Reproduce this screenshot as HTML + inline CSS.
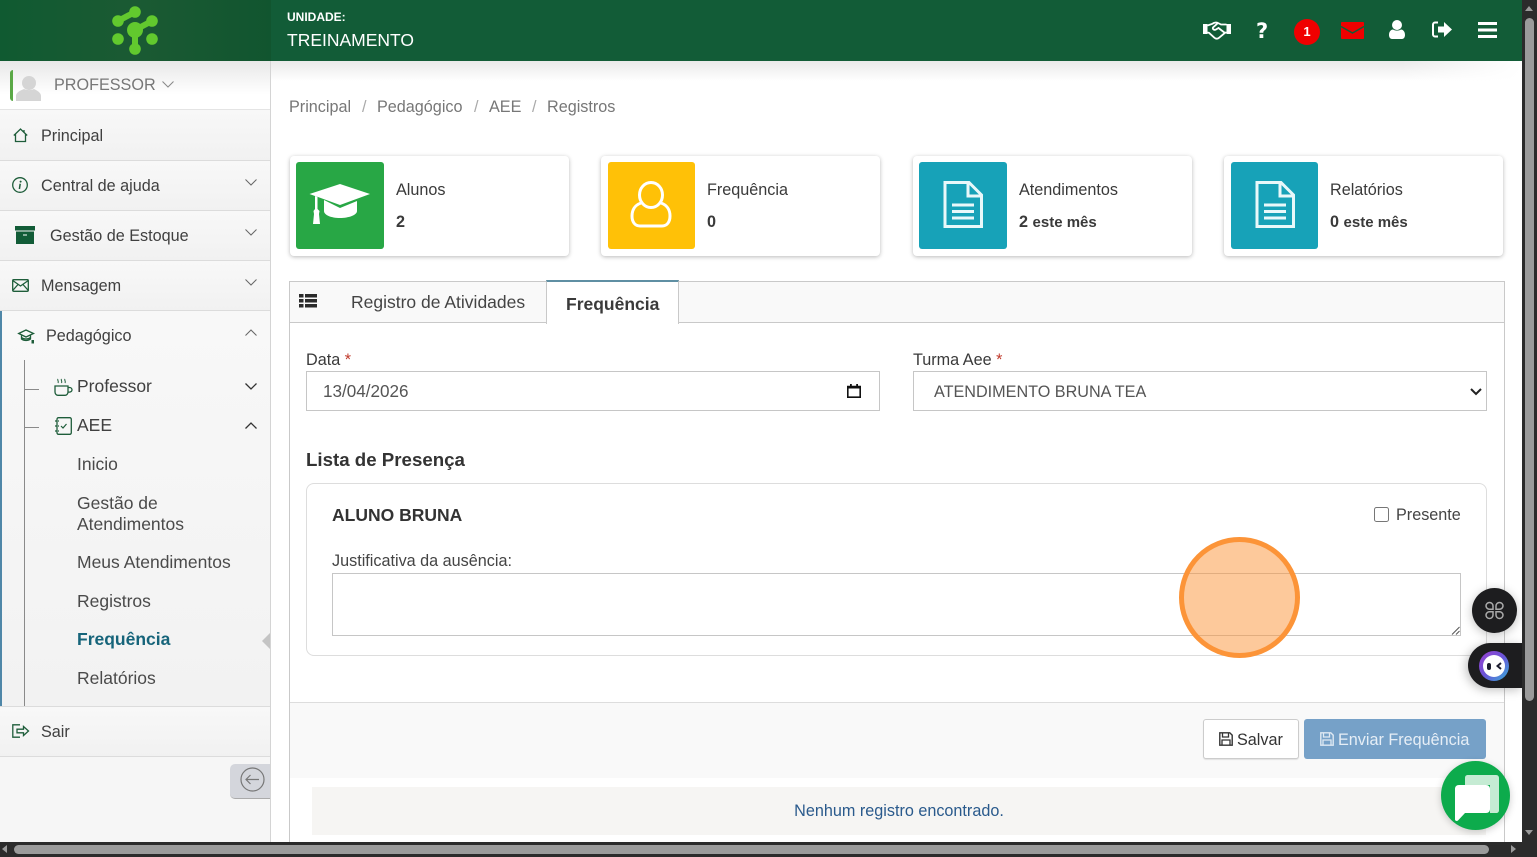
<!DOCTYPE html>
<html lang="pt-BR"><head><meta charset="utf-8"><title>Frequência</title>
<style>
*{box-sizing:border-box}
html,body{margin:0;padding:0;width:1537px;height:857px;overflow:hidden;background:#fff;font-family:"Liberation Sans",sans-serif;color:#3a3a3a;font-size:16.2px}
.a{position:absolute}
.t{position:absolute;white-space:nowrap;line-height:20px}
svg{position:absolute;display:block;overflow:visible}
.item{position:absolute;left:0;width:270px;background:linear-gradient(#f8f8f8,#f1f1f1);border-bottom:1px solid #dcdcdc}
.card{position:absolute;top:156px;width:279px;height:100px;background:#fff;border-radius:4px;box-shadow:0 1px 4px rgba(0,0,0,.28)}
.sq{position:absolute;top:6px;height:87px;border-radius:3px}
.card .l{position:absolute;left:106px;top:24px;line-height:20px;white-space:nowrap}
.card .n{position:absolute;left:106px;top:56px;line-height:20px;font-weight:bold;white-space:nowrap}
.g{fill:none;stroke:#1e5d3a;stroke-width:1.3}
.c{fill:none;stroke:#666;stroke-width:1}
.w{color:#404040}
.s{font-size:17.5px;color:#4a4a4a}
</style></head><body>

<!-- header -->
<div class="a" style="left:0;top:0;width:1522px;height:61px;background:#125c37"></div>
<div class="a" style="left:0;top:0;width:271px;height:61px;background:linear-gradient(90deg,#105a31,#1b5a33 50%,#11552f)"></div>
<svg style="left:101px;top:0" width="70" height="60" viewBox="0 0 70 60">
<g stroke="#62c92e" fill="none"><path d="M17 21 34 12" stroke-width="6"/><path d="M34 30 51 21" stroke-width="6"/><path d="M34 30V49" stroke-width="6"/></g>
<g fill="#62c92e"><circle cx="34" cy="12" r="5.800"/><circle cx="17" cy="21" r="5.800"/><circle cx="51" cy="21" r="5.800"/><circle cx="34" cy="30" r="8"/><circle cx="17" cy="39" r="5.800"/><circle cx="51" cy="39" r="5.800"/><circle cx="34" cy="49" r="5.800"/></g></svg>
<div class="t" style="left:287px;top:7px;font-size:12px;font-weight:bold;color:#fff">UNIDADE:</div>
<div class="t" style="left:287px;top:30px;font-size:17.500px;color:#fff">TREINAMENTO</div>

<!-- header icons -->
<svg style="left:1203px;top:20px" width="28" height="20" viewBox="0 0 28 20"><path d="M0 4h4.500v10H0zM23.500 4H28v10h-4.500z" fill="#fff"/><path d="M4.500 5.500 9 4c2-1.500 4-2 6-1l3 1.500h5.500M4.500 12.500 6 12.800l5.500 5c1.500 1.200 3 1.200 4.500 0l6-5 1.500-.5M15 3l-5 4.500c-1 1.500 1.500 3 3 2l2.500-1.500 6.500 5" fill="none" stroke="#fff" stroke-width="1.800"/></svg>
<div class="t" style="left:1256px;top:21px;font-size:21px;font-weight:bold;color:#fff;font-family:'DejaVu Sans',sans-serif">?</div>
<div class="a" style="left:1294px;top:19px;width:26px;height:26px;border-radius:50%;background:#f00000"></div>
<div class="t" style="left:1294px;top:22px;width:26px;text-align:center;font-size:13px;font-weight:bold;color:#fff">1</div>
<svg style="left:1341px;top:22px" width="23" height="17" viewBox="0 0 23 17"><rect width="23" height="17" rx="1" fill="#f00000"/><path d="M0 4.500 11.500 11 23 4.500" fill="none" stroke="#125c37" stroke-width="1.500"/></svg>
<svg style="left:1389px;top:20px" width="16" height="19" viewBox="0 0 16 19"><circle cx="8" cy="5" r="5" fill="#fff"/><path d="M0 15c0-3.500 2-5.500 4-5.500 2.500 1.500 5.500 1.500 8 0 2 0 4 2 4 5.500 0 2.500-1.500 4-3 4H3c-1.500 0-3-1.500-3-4z" fill="#fff"/></svg>
<svg style="left:1432px;top:21px" width="20" height="17" viewBox="0 0 20 17"><path d="M6 1.500H3C1.800 1.500 1 2.500 1 3.500v10c0 1 .8 2 2 2h3" fill="none" stroke="#fff" stroke-width="2"/><path d="M6 5.500h6V1l8 7.500-8 7.500v-4.500H6z" fill="#fff"/></svg>
<svg style="left:1478px;top:22px" width="19" height="16" viewBox="0 0 19 16"><path d="M0 0h19v3H0zM0 6.500h19v3H0zM0 13h19v3H0z" fill="#fff"/></svg>

<!-- top shadow in main -->
<div class="a" style="left:271px;top:61px;width:1251px;height:20px;background:linear-gradient(#e9e9e9,#fff);"></div>
<div class="a" style="left:1400px;top:61px;width:122px;height:20px;background:linear-gradient(90deg,rgba(255,255,255,0),#fff)"></div>

<!-- sidebar -->
<div class="a" style="left:0;top:61px;width:271px;height:781px;background:#f6f6f6;border-right:1px solid #d4d4d4"></div>
<div class="a" style="left:0;top:61px;width:270px;height:49px;background:linear-gradient(#e8e8e8,#fff 70%);border-bottom:1px solid #e4e4e4"></div>
<div class="a" style="left:10px;top:70px;width:3px;height:31px;background:#5aa846;border-radius:3px 0 0 3px"></div>
<svg style="left:15px;top:75px" width="27" height="26" viewBox="0 0 27 26"><circle cx="14" cy="8" r="7" fill="#d5d5d5"/><path d="M1 26v-5c0-3 3-5 8-7 3 1.500 7 1.500 10 0 4 2 7 4 7 7v5z" fill="#d5d5d5"/></svg>
<div class="t" style="left:54px;top:75px;color:#777">PROFESSOR</div>
<svg style="left:162px;top:81px" width="12" height="7" viewBox="0 0 12 7"><path fill="none" stroke="#888" stroke-width="1" d="M.5.500 6 6l5.500-5.500"/></svg>

<div class="item" style="top:110px;height:51px"></div>
<div class="t w" style="left:41px;top:126px">Principal</div>
<svg style="left:13px;top:128px" width="15" height="14" viewBox="0 0 15 14"><path class="g" d="M.8 7.500 7.500 1l6.700 6.500M2.500 6v7.500h10V6M11 2v2.500"/></svg>

<div class="item" style="top:161px;height:50px"></div>
<div class="t w" style="left:41px;top:176px">Central de ajuda</div>
<svg style="left:12px;top:177px" width="16" height="16" viewBox="0 0 16 16"><circle class="g" cx="8" cy="8" r="7.300"/><path d="M8.200 6.800 7.400 12" stroke="#1e5d3a" stroke-width="1.500"/><circle cx="8.600" cy="4.600" r="1" fill="#1e5d3a"/></svg>
<svg style="left:245px;top:179px" width="12" height="7" viewBox="0 0 12 7"><path class="c" d="M.5.500 6 6l5.500-5.500"/></svg>

<div class="item" style="top:211px;height:50px"></div>
<div class="t w" style="left:50px;top:226px">Gestão de Estoque</div>
<svg style="left:15px;top:226px" width="20" height="18" viewBox="0 0 20 18"><path d="M0 0h20v4.500H0zM1 5.500h18V18H1z" fill="#125c37"/><path d="M8 9h4" stroke="#fff" stroke-width="1"/></svg>
<svg style="left:245px;top:229px" width="12" height="7" viewBox="0 0 12 7"><path class="c" d="M.5.500 6 6l5.500-5.500"/></svg>

<div class="item" style="top:261px;height:50px"></div>
<div class="t w" style="left:41px;top:276px">Mensagem</div>
<svg style="left:12px;top:279px" width="17" height="13" viewBox="0 0 17 13"><rect class="g" x=".7" y=".7" width="15.600" height="11.600" rx="1"/><path class="g" d="M.7 1.500 8.500 7l7.800-5.500M.7 11.500 6 5.500M16.300 11.500 11 5.500"/></svg>
<svg style="left:245px;top:279px" width="12" height="7" viewBox="0 0 12 7"><path class="c" d="M.5.500 6 6l5.500-5.500"/></svg>

<div class="a" style="left:0;top:311px;width:270px;height:396px;background:linear-gradient(#f8f8f8,#f2f2f2);border-bottom:1px solid #dcdcdc"></div>
<div class="a" style="left:0;top:311px;width:2px;height:395px;background:#4f87a8"></div>
<div class="t w" style="left:46px;top:326px">Pedagógico</div>
<svg style="left:18px;top:329px" width="17" height="15" viewBox="0 0 17 15"><path class="g" d="M.7 4.500 8 1l7.500 3.500L8 8zM3.500 6.500V10c2.500 2 6.500 2 9 0V6.500M3.500 8.500c2.500 2 6.500 2 9 0"/><path d="M13.500 11h2.500v3.500h-2.500z" fill="#1e5d3a"/></svg>
<svg style="left:245px;top:329px" width="12" height="7" viewBox="0 0 12 7"><path class="c" d="M.5 6.500 6 1l5.500 5.500"/></svg>

<div class="a" style="left:24px;top:360px;width:1px;height:346px;background:#8a8a8a"></div>
<div class="a" style="left:25px;top:389px;width:14px;height:1px;background:#8a8a8a"></div>
<div class="a" style="left:25px;top:427px;width:14px;height:1px;background:#8a8a8a"></div>

<svg style="left:54px;top:378px" width="19" height="18" viewBox="0 0 19 18"><path class="g" d="M1 8h13v6c0 2-1.500 3.300-3 3.300H4c-1.500 0-3-1.300-3-3.300zM14 9.500h1.500c1.500 0 2.500 1 2.500 2.300s-1 2.300-2.500 2.300H14"/><path d="M4 1c-1 1 1 2 0 4M7.500 1c-1 1 1 2 0 4M11 1c-1 1 1 2 0 4" fill="none" stroke="#1e5d3a" stroke-width="1"/></svg>
<div class="t" style="left:77px;top:376px;font-size:17.500px;color:#404040">Professor</div>
<svg style="left:245px;top:383px" width="12" height="7" viewBox="0 0 12 7"><path fill="none" stroke="#333" stroke-width="1.300" d="M.5.500 6 6l5.500-5.500"/></svg>

<svg style="left:55px;top:417px" width="17" height="18" viewBox="0 0 17 18"><rect class="g" x="2" y=".7" width="14.300" height="16.600" rx="1.500"/><path d="M6 9l2 2 3.500-4" fill="none" stroke="#1e5d3a" stroke-width="1.200"/><path d="M0 4h4M0 9h4M0 14h4" stroke="#1e5d3a" stroke-width="1.200" stroke-dasharray="2 1"/></svg>
<div class="t" style="left:77px;top:415px;font-size:17.500px;color:#404040">AEE</div>
<svg style="left:245px;top:422px" width="12" height="7" viewBox="0 0 12 7"><path fill="none" stroke="#333" stroke-width="1.300" d="M.5 6.500 6 1l5.500 5.500"/></svg>

<div class="t s" style="left:77px;top:454px">Inicio</div>
<div class="t s" style="left:77px;top:493px;line-height:21px">Gestão de<br>Atendimentos</div>
<div class="t s" style="left:77px;top:552px">Meus Atendimentos</div>
<div class="t s" style="left:77px;top:591px">Registros</div>
<div class="t s" style="left:77px;top:629px;font-weight:bold;color:#16647a">Frequência</div>
<div class="t s" style="left:77px;top:668px">Relatórios</div>
<div class="a" style="left:262px;top:633px;width:0;height:0;border-top:8px solid transparent;border-bottom:8px solid transparent;border-right:8px solid #c4c4c4"></div>

<div class="item" style="top:707px;height:50px"></div>
<div class="t w" style="left:41px;top:722px">Sair</div>
<svg style="left:12px;top:724px" width="18" height="14" viewBox="0 0 18 14"><path class="g" d="M8 .8H.8v12.400H8M5 5.200h6.500V2.500L16.500 7l-5 4.500V8.800H5z"/></svg>

<div class="a" style="left:230px;top:764px;width:40px;height:35px;background:#d4d6dc;border-radius:5px 0 0 5px;border-bottom:1px solid #aaa"></div>
<svg style="left:240px;top:767px" width="25" height="25" viewBox="0 0 25 25"><circle cx="12.500" cy="12.500" r="11.500" fill="none" stroke="#777" stroke-width="1.200"/><path d="M19 12.500H6M10.500 8 6 12.500l4.500 4.500" fill="none" stroke="#777" stroke-width="1.200"/></svg>

<!-- breadcrumb -->
<div class="t" style="left:289px;top:97px;color:#777">Principal</div>
<div class="t" style="left:362px;top:97px;color:#aaa">/</div>
<div class="t" style="left:377px;top:97px;color:#777">Pedagógico</div>
<div class="t" style="left:474px;top:97px;color:#aaa">/</div>
<div class="t" style="left:489px;top:97px;color:#777">AEE</div>
<div class="t" style="left:532px;top:97px;color:#aaa">/</div>
<div class="t" style="left:547px;top:97px;color:#777">Registros</div>

<!-- cards -->
<div class="card" style="left:290px"><div class="sq" style="left:6px;width:88px;background:#28a745"></div>
<svg style="left:19px;top:27px" width="62" height="43" viewBox="0 0 62 43"><path d="M31 1 61 11 31 22 9 14 6 13 0.500 11z" fill="#fff"/><path d="M15 17 31 25l17-7v10c0 4-8 7-17 7s-16-3-16-7z" fill="#fff"/><path d="M6 13v13l-1.500 2 .5 3-1 10h7l-1-10 .5-3-2-2V14z" fill="#fff"/></svg>
<div class="l">Alunos</div><div class="n">2</div></div>

<div class="card" style="left:601px"><div class="sq" style="left:7px;width:87px;background:#ffc107"></div>
<svg style="left:29px;top:25px" width="42" height="47" viewBox="0 0 42 47"><ellipse cx="21" cy="14" rx="11.500" ry="12.500" fill="none" stroke="#fff" stroke-width="3"/><path d="M11 22C5 24 2 29 2 35c0 6 3 10 8 10h22c5 0 8-4 8-10 0-6-3-11-9-13" fill="none" stroke="#fff" stroke-width="3"/></svg>
<div class="l">Frequência</div><div class="n">0</div></div>

<div class="card" style="left:913px"><div class="sq" style="left:6px;width:88px;background:#17a2b8"></div>
<svg style="left:30px;top:25px" width="40" height="47" viewBox="0 0 40 47"><path d="M2 1.500h24L38.500 14v31.500H2zM25 1.500V15h13.500" fill="none" stroke="#e8f8fa" stroke-width="3"/><path d="M9 24h22M9 30.500h22M9 37h22" stroke="#e8f8fa" stroke-width="3"/></svg>
<div class="l">Atendimentos</div><div class="n">2 <span style="font-size:15px">este mês</span></div></div>

<div class="card" style="left:1224px"><div class="sq" style="left:7px;width:87px;background:#17a2b8"></div>
<svg style="left:31px;top:25px" width="40" height="47" viewBox="0 0 40 47"><path d="M2 1.500h24L38.500 14v31.500H2zM25 1.500V15h13.500" fill="none" stroke="#e8f8fa" stroke-width="3"/><path d="M9 24h22M9 30.500h22M9 37h22" stroke="#e8f8fa" stroke-width="3"/></svg>
<div class="l">Relatórios</div><div class="n">0 <span style="font-size:15px">este mês</span></div></div>

<!-- tabs panel -->
<div class="a" style="left:289px;top:281px;width:1216px;height:561px;border:1px solid #c9c9c9;border-bottom:0;background:#fff"></div>
<div class="a" style="left:290px;top:282px;width:1214px;height:41px;background:#f9f9f9;border-bottom:1px solid #c9c9c9"></div>
<svg style="left:299px;top:294px" width="18" height="14" viewBox="0 0 18 14"><path d="M0 0h4.500v3.500H0zM6 0h12v3.500H6zM0 5h4.500v3.500H0zM6 5h12v3.500H6zM0 10h4.500v3.500H0zM6 10h12v3.500H6z" fill="#2b2b2b"/></svg>
<div class="t" style="left:351px;top:292px;font-size:17.500px;color:#444">Registro de Atividades</div>
<div class="a" style="left:546px;top:280px;width:133px;height:44px;background:#fff;border:1px solid #c9c9c9;border-top:2px solid #5f8fa3;border-bottom:0"></div>
<div class="t" style="left:566px;top:294px;font-size:17.500px;font-weight:bold;color:#3a3a3a">Frequência</div>

<!-- form -->
<div class="t" style="left:306px;top:350px">Data <span style="color:#c0392b">*</span></div>
<div class="a" style="left:306px;top:371px;width:574px;height:40px;border:1px solid #c6c6c6"></div>
<div class="t" style="left:323px;top:382px;font-size:17.100px;color:#555">13/04/2026</div>
<svg style="left:847px;top:384px" width="14" height="14" viewBox="0 0 14 14"><path d="M.8 2.500h12.400v10.700H.8z" fill="none" stroke="#111" stroke-width="1.600"/><path d="M.8 2h12.400v2.500H.8zM3 0h1.800v2H3zM9.200 0H11v2H9.200z" fill="#111"/></svg>

<div class="t" style="left:913px;top:350px">Turma Aee <span style="color:#c0392b">*</span></div>
<div class="a" style="left:913px;top:371px;width:574px;height:40px;border:1px solid #c6c6c6"></div>
<div class="t" style="left:934px;top:382px;color:#555">ATENDIMENTO BRUNA TEA</div>
<svg style="left:1470px;top:388px" width="12" height="8" viewBox="0 0 12 8"><path d="M1 1l5 5 5-5" fill="none" stroke="#222" stroke-width="2"/></svg>

<div class="t" style="left:306px;top:450px;font-size:18.700px;font-weight:bold;color:#333">Lista de Presença</div>

<div class="a" style="left:306px;top:483px;width:1181px;height:173px;border:1px solid #ddd;border-radius:8px"></div>
<div class="t" style="left:332px;top:505px;font-size:17.500px;font-weight:bold;color:#333">ALUNO BRUNA</div>
<div class="a" style="left:1374px;top:507px;width:15px;height:15px;border:1px solid #767676;border-radius:2.500px;background:#fff"></div>
<div class="t" style="left:1396px;top:505px;color:#444">Presente</div>
<div class="t" style="left:332px;top:551px;color:#444">Justificativa da ausência:</div>
<div class="a" style="left:332px;top:573px;width:1129px;height:63px;border:1px solid #c6c6c6"></div>
<svg style="left:1452px;top:627px" width="8" height="8" viewBox="0 0 8 8"><path d="M0 7.500 7.500 0M4 7.500 7.500 4" stroke="#555" stroke-width="1"/></svg>

<!-- footer -->
<div class="a" style="left:290px;top:702px;width:1214px;height:76px;background:#f9f9f9;border-top:1px solid #ddd"></div>
<div class="a" style="left:1203px;top:719px;width:96px;height:40px;background:#fff;border:1px solid #ccc;border-radius:3px;box-shadow:0 1px 1px rgba(0,0,0,.1)"></div>
<svg style="left:1219px;top:732px" width="14" height="14" viewBox="0 0 14 14"><path d="M.8.800h10l2.400 2.400v10H.8z" fill="none" stroke="#333" stroke-width="1.400"/><path d="M3.500 1v4h6V1M3 13V8h8v5" fill="none" stroke="#333" stroke-width="1.300"/></svg>
<div class="t" style="left:1237px;top:730px;color:#333">Salvar</div>
<div class="a" style="left:1304px;top:719px;width:182px;height:40px;background:#76a1c8;border-radius:3px"></div>
<svg style="left:1320px;top:732px" width="14" height="14" viewBox="0 0 14 14"><path d="M.8.800h10l2.400 2.400v10H.8z" fill="none" stroke="#dfe9f3" stroke-width="1.400"/><path d="M3.500 1v4h6V1M3 13V8h8v5" fill="none" stroke="#dfe9f3" stroke-width="1.300"/></svg>
<div class="t" style="left:1338px;top:730px;color:#e6eef6">Enviar Frequência</div>

<div class="a" style="left:312px;top:787px;width:1174px;height:48px;background:#f6f5f3"></div>
<div class="t" style="left:312px;top:801px;width:1174px;text-align:center;color:#2a5a8c">Nenhum registro encontrado.</div>

<!-- orange cursor -->
<div class="a" style="left:1179px;top:537px;width:121px;height:121px;border-radius:50%;background:rgba(252,148,56,.5);border:5px solid #fc9438"></div>

<!-- floats -->
<div class="a" style="left:1472px;top:588px;width:45px;height:45px;border-radius:50%;background:#1d1d1f;box-shadow:0 2px 10px rgba(0,0,0,.25)"></div>
<svg style="left:1485px;top:601px" width="19" height="19" viewBox="0 0 19 19"><g fill="none" stroke="#aaa" stroke-width="1.500"><path d="M1 5a3.500 3.500 0 1 1 7 0v3.200H4.500A3.500 3.500 0 0 1 1 5z"/><path d="M18 5a3.500 3.500 0 1 0-7 0v3.200h3.500A3.500 3.500 0 0 0 18 5z"/><path d="M1 14a3.500 3.500 0 1 0 7 0v-3.200H4.500A3.500 3.500 0 0 0 1 14z"/><path d="M18 14a3.500 3.500 0 1 1-7 0v-3.200h3.500A3.500 3.500 0 0 1 18 14z"/></g></svg>
<div class="a" style="left:1468px;top:643px;width:54px;height:45px;border-radius:23px 0 0 23px;background:#1d1d1f;box-shadow:-2px 2px 10px rgba(0,0,0,.25)"></div>
<div class="a" style="left:1479px;top:651px;width:30px;height:30px;border-radius:50%;background:linear-gradient(135deg,#9a3fd0,#6a55d8 50%,#35b0d8)"></div>
<div class="a" style="left:1483px;top:655px;width:22px;height:22px;border-radius:50%;background:#fff"></div>
<div class="a" style="left:1487px;top:663px;width:3.500px;height:7px;border-radius:2px;background:#1d1d2f"></div>
<svg style="left:1496px;top:662px" width="6" height="8" viewBox="0 0 6 8"><path d="M5 1 1.500 4 5 7" fill="none" stroke="#1d1d2f" stroke-width="2"/></svg>

<div class="a" style="left:1441px;top:761px;width:69px;height:69px;border-radius:50%;background:#0dab4c;box-shadow:0 2px 8px rgba(0,0,0,.2)"></div>
<svg style="left:1455px;top:775px" width="45" height="47" viewBox="0 0 45 47"><path d="M13 0h28c2 0 3 1.500 3 3v32c0 2-1 3-3 3h-6V10H10V3c0-2 1-3 3-3z" fill="#c5ebd3"/><path d="M4 10h27c2.500 0 4 1.500 4 4v20c0 2.500-1.500 4-4 4H10l-7 7.500c-1 1-3 .5-3-1V14c0-2.500 1.500-4 4-4z" fill="#fff"/></svg>

<!-- scrollbars -->
<div class="a" style="left:1522px;top:0;width:15px;height:857px;background:#2b2b2b"></div>
<div class="a" style="left:1525px;top:18px;width:9px;height:683px;border-radius:5px;background:#9b9b9b"></div>
<div class="a" style="left:1525px;top:6px;width:0;height:0;border-left:4.500px solid transparent;border-right:4.500px solid transparent;border-bottom:5px solid #9b9b9b"></div>
<div class="a" style="left:1525px;top:830px;width:0;height:0;border-left:4.500px solid transparent;border-right:4.500px solid transparent;border-top:5px solid #9b9b9b"></div>
<div class="a" style="left:0;top:842px;width:1537px;height:15px;background:#2b2b2b"></div>
<div class="a" style="left:14px;top:845px;width:1475px;height:9px;border-radius:5px;background:#9b9b9b"></div>
<div class="a" style="left:2px;top:845px;width:0;height:0;border-top:4.500px solid transparent;border-bottom:4.500px solid transparent;border-right:5px solid #9b9b9b"></div>
<div class="a" style="left:1511px;top:845px;width:0;height:0;border-top:4.500px solid transparent;border-bottom:4.500px solid transparent;border-left:5px solid #9b9b9b"></div>
</body></html>
